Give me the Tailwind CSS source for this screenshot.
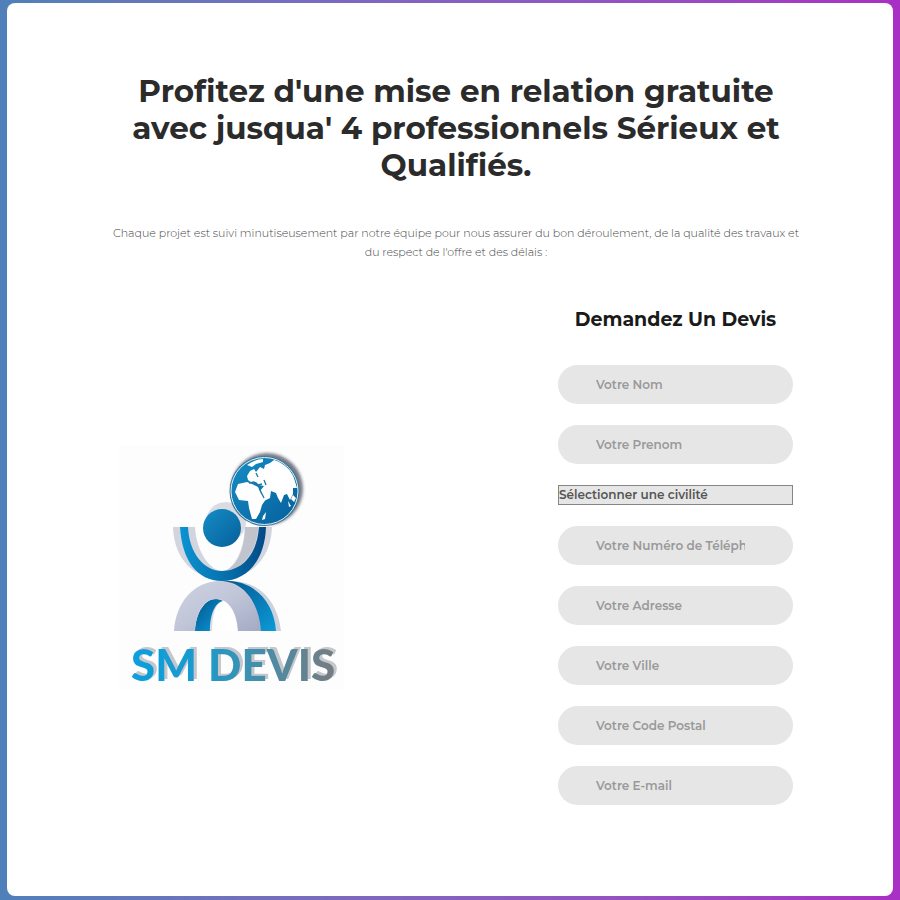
<!DOCTYPE html>
<html lang="fr">
<head>
<meta charset="utf-8">
<meta name="viewport" content="width=device-width, initial-scale=1">
<title>SM Devis</title>
<script src="https://cdn.jsdelivr.net/npm/@tailwindcss/browser@4"></script>
</head>
<body class="flex min-h-screen flex-col bg-linear-to-r from-[#4f80ba] to-[#a82fc4] px-[7px] pt-[3px] pb-1 font-['Montserrat','Inter',sans-serif]">
<main class="flex-1 rounded-lg bg-white pt-[70px] pr-[100px] pb-[88px] pl-28">
  <h1 class="text-center text-[31px] leading-[37px] font-bold text-[#2b2b2b]">Profitez d'une mise en relation gratuite avec jusqua' 4 professionnels Sérieux et Qualifiés.</h1>
  <p class="-mx-3 mt-[40px] text-center text-[11px] leading-[19px] font-light text-[#444444]">Chaque projet est suivi minutiseusement par notre équipe pour nous assurer du bon déroulement, de la qualité des travaux et du respect de l'offre et des délais :</p>
  <div class="mt-[46px] flex items-center justify-between">
    <svg class="mt-5 h-[244px] w-[225px] shrink-0" viewBox="119 445 225 244" role="img" aria-label="SM Devis">
      <defs>
        <linearGradient id="word" gradientUnits="userSpaceOnUse" x1="133" y1="0" x2="335" y2="0"><stop offset="0" stop-color="#0aa0dd"/><stop offset=".3" stop-color="#1a9bcf"/><stop offset=".6" stop-color="#4190ad"/><stop offset="1" stop-color="#777b80"/></linearGradient>
        <linearGradient id="arm" x1="0" y1="0" x2="1" y2="0"><stop offset="0" stop-color="#0a93d3"/><stop offset=".5" stop-color="#0673ae"/><stop offset="1" stop-color="#034a86"/></linearGradient>
        <linearGradient id="leg" x1="0" y1="0" x2="1" y2="1"><stop offset="0" stop-color="#04558d"/><stop offset="1" stop-color="#0b9bd8"/></linearGradient>
        <linearGradient id="silver" x1="0" y1="0" x2="1" y2="1"><stop offset="0" stop-color="#cfd3e2"/><stop offset=".5" stop-color="#c0c5d8"/><stop offset="1" stop-color="#a2a9c2"/></linearGradient>
        <linearGradient id="sea" x1="0" y1="0" x2="1" y2="1"><stop offset="0" stop-color="#168dc6"/><stop offset="1" stop-color="#055f9b"/></linearGradient>
        <filter id="soft" x="-20%" y="-20%" width="140%" height="140%"><feGaussianBlur stdDeviation="1.5"/></filter>
        <filter id="cast" x="-10%" y="-20%" width="120%" height="140%"><feDropShadow dx="3" dy="-2" stdDeviation=".4" flood-color="#c4c8cc"/></filter>
      </defs>
      <rect x="119" y="445" width="225" height="244" fill="#fdfdfd"/>
      <circle cx="226" cy="522" r="20" fill="#dadce3"/>
      <path d="M173 527C174 560 195 579 222 579C249 579 271 560 272 527H245C244 552 233 571 222 571C211 571 196 552 195 527Z" fill="#d2d4de"/>
      <path d="M245 527H258C257 550 243 570 224 572C237 566 245 550 245 527Z" fill="#c1c4cd"/>
      <path d="M180 527H188C189 553 204 571 222 571C242 571 257 555 259 527H266C265 560 247 581 222 581C197 581 182 560 180 527Z" fill="url(#arm)"/>
      <path d="M227 581C260 579 278 603 281 631H274C268 605 251 587 227 581Z" fill="#ccd1de"/>
      <path d="M222 581C252 579 274 600 276 631H260C258 607 246 588 222 581Z" fill="url(#leg)"/>
      <path d="M210 631C210 612 215 601 223 599C230 603 237 614 239 631Z" fill="#d9dce5"/>
      <path d="M212 631C212 614 216 603 223 600C231 604 237 616 238 631Z" fill="#fff"/>
      <path d="M195 631C196 612 205 599 216 599Q220 599 223 601C214 603 210 616 210 631Z" fill="url(#leg)"/>
      <path d="M174 631C176 602 194 581 220 581C245 581 259 604 261 631H238C237 612 229 599 216 599C204 599 196 612 195 631Z" fill="url(#silver)"/>
      <circle cx="222" cy="528" r="19" fill="url(#sea)"/>
      <circle cx="267" cy="489" r="36" fill="#4a5060" opacity=".75" filter="url(#soft)"/>
      <circle cx="264.500" cy="491" r="35" fill="#3b7898"/>
      <circle cx="264.500" cy="491" r="33.500" fill="url(#sea)" stroke="#e4eff5"/>
      <g fill="#fff">
        <path d="M247 465Q255 459 263 459L263 462L256 464L252 467Z"/>
        <path d="M247 476L250 471L254 469L256 472L260 467L264 469L265 465L270 463L274 460C284 463 291 470 294 478L297 488L293 488L293 494L290 500L287 494L284 495L281 503L278 498L276 493L271 491L270 498L264 501L260 491L264 486L259 485L256 482L252 483L248 480Z"/>
        <path d="M238 484L247 482L252 484L258 487L261 494L266 499L262 505L260 512L256 519L252 519L249 508L248 501L239 500L235 492Z"/>
        <path d="M263 516L266 512L265 519L262 520ZM293 495L296 498L294 502L291 499ZM288 501L291 506L289 507Z"/>
      </g>
      <path d="M249 483L254 482L258 485L262 484M256 473L258 477M264 480L266 485M260 490L264 498" fill="none" stroke="#1878a8" stroke-width="1.300"/>
      <g font-family="Lato, 'Open Sans', sans-serif" font-weight="900" font-size="44" fill="url(#word)" filter="url(#cast)">
        <text x="131" y="681">SM</text>
        <text x="208" y="681">DEVIS</text>
      </g>
    </svg>
    <form class="flex w-[235px] flex-col">
      <h2 class="mb-[33px] text-center text-[19px] leading-6 font-bold text-[#1a1a1a]">Demandez Un Devis</h2>
      <div class="flex flex-col gap-[21px] text-[12px] font-semibold">
        <input aria-label="Votre Nom" placeholder="Votre Nom" class="h-[39px] w-full rounded-full bg-[#e6e6e6] pr-12 pl-[38px] placeholder:text-[#999999]">
        <input aria-label="Votre Prenom" placeholder="Votre Prenom" class="h-[39px] w-full rounded-full bg-[#e6e6e6] pr-12 pl-[38px] placeholder:text-[#999999]">
        <select aria-label="Civilité" class="h-5 w-full appearance-none border border-[#858585] bg-[#e6e6e6] text-[#555555]"><option>Sélectionner une civilité</option><option>Madame</option><option>Monsieur</option></select>
        <input type="tel" aria-label="Votre Numéro de Téléphone" placeholder="Votre Numéro de Téléphone" class="h-[39px] w-full rounded-full bg-[#e6e6e6] pr-12 pl-[38px] placeholder:text-[#999999]">
        <input aria-label="Votre Adresse" placeholder="Votre Adresse" class="h-[39px] w-full rounded-full bg-[#e6e6e6] pr-12 pl-[38px] placeholder:text-[#999999]">
        <input aria-label="Votre Ville" placeholder="Votre Ville" class="h-[39px] w-full rounded-full bg-[#e6e6e6] pr-12 pl-[38px] placeholder:text-[#999999]">
        <input aria-label="Votre Code Postal" placeholder="Votre Code Postal" class="h-[39px] w-full rounded-full bg-[#e6e6e6] pr-12 pl-[38px] placeholder:text-[#999999]">
        <input type="email" aria-label="Votre E-mail" placeholder="Votre E-mail" class="h-[39px] w-full rounded-full bg-[#e6e6e6] pr-12 pl-[38px] placeholder:text-[#999999]">
      </div>
    </form>
  </div>
</main>
</body>
</html>
